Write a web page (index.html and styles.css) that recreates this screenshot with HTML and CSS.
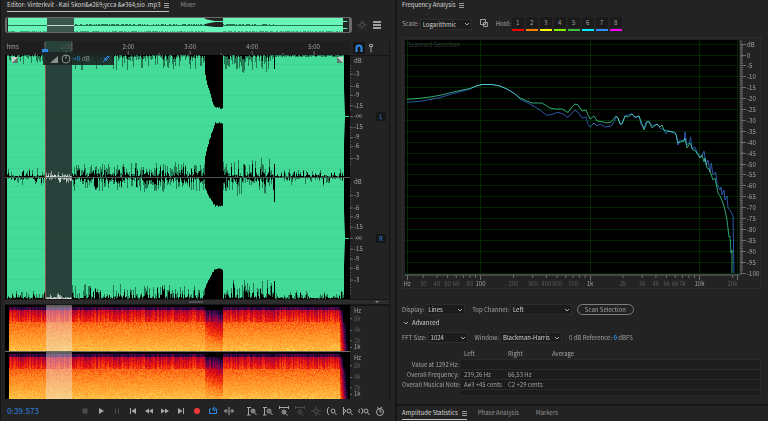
FILE: index.html
```html
<!DOCTYPE html>
<html lang="en">
<head>
  <meta charset="UTF-8">
  <meta name="viewport" content="width=device-width, initial-scale=1.0">
  <title>Audio Editor</title>
  <link rel="stylesheet" href="styles.css">
</head>
<body>
  <section class="panel editor">
    <nav class="tabs">
      <a class="tab active" href="#editor">Editor: Vinterkvit - Kali Skon&amp;#269;ycca &amp;#364;sio .mp3 <span class="menu"></span></a>
      <a class="tab" href="#mixer">Mixer</a>
    </nav>

    <div class="overview">
      <div class="overview-frame"><canvas id="overview"></canvas></div>
      <svg class="icon dim" viewBox="0 0 12 12"><circle cx="6" cy="6" r="2"/><path d="M1 6h3M8 6h3M6 1.500v2.500M6 8v2.500M3 9l1.500-1.500M9 3 7.500 4.500M9 9l1 1"/></svg>
      <svg class="icon list" viewBox="0 0 12 12"><path d="M2 3h8M2 6h8M2 9h8"/></svg>
    </div>

    <div class="tracks">
      <svg class="ruler" id="ruler"></svg>
      <div class="ruler-tools">
        <button class="snap" aria-label="Snapping"><svg class="icon" viewBox="0 0 12 12"><path d="M3.500 10V6a2.500 2.500 0 0 1 5 0v4"/></svg></button>
        <button aria-label="Marker"><svg class="icon" viewBox="0 0 12 12"><path d="M4.500 2.500h3v2h-3zM6 4v6.500"/></svg></button>
      </div>

      <canvas class="wave" id="wave"></canvas>
      <div class="gutter">
        <svg class="scale" id="db-scale"></svg>
        <div class="channels">
          <button class="channel">L</button>
          <button class="channel">R</button>
        </div>
      </div>

      <div class="scrollbar"><span class="thumb"></span><span class="arrow"></span></div>

      <canvas class="spectrum" id="spectrum"></canvas>
      <div class="gutter"><svg class="scale" id="hz-scale"></svg></div>

      <div class="hud">
        <svg viewBox="0 0 22 12"><path class="fill" d="M1 10h8V3z"/><circle cx="17" cy="6" r="4"/><path d="M17 6V2"/></svg>
        <span class="gain">+0</span><span>dB</span>
        <svg class="pin" viewBox="0 0 12 12"><path d="m3 9 2-2M4 5l3 3M5 6l3-3 1 1-3 3"/></svg>
      </div>
    </div>

    <div class="transport">
      <output class="time">0:39.573</output>
      <div class="buttons">
        <button class="dim" aria-label="Stop"><svg class="icon" viewBox="0 0 12 12"><path class="fill" d="M3.500 3.500h5v5h-5z"/></svg></button>
        <button aria-label="Play"><svg class="icon" viewBox="0 0 12 12"><path class="fill" d="M4 3l5 3-5 3z"/></svg></button>
        <button class="dim" aria-label="Pause"><svg class="icon" viewBox="0 0 12 12"><path d="M4.500 3.500v5M7.500 3.500v5"/></svg></button>
        <button aria-label="Previous"><svg class="icon" viewBox="0 0 12 12"><path class="fill" d="M9 3v6L4.500 6z"/><path d="M3.500 3v6"/></svg></button>
        <button aria-label="Rewind"><svg class="icon" viewBox="0 0 12 12"><path class="fill" d="M6 3.500v5L2 6zM10 3.500v5L6 6z"/></svg></button>
        <button aria-label="Fast forward"><svg class="icon" viewBox="0 0 12 12"><path class="fill" d="M2 3.500v5L6 6zM6 3.500v5L10 6z"/></svg></button>
        <button aria-label="Next"><svg class="icon" viewBox="0 0 12 12"><path class="fill" d="M3 3v6l4.500-3z"/><path d="M8.500 3v6"/></svg></button>
        <button class="record" aria-label="Record"><svg class="icon" viewBox="0 0 12 12"><circle class="fill" cx="6" cy="6" r="3"/></svg></button>
        <button class="loop" aria-label="Loop"><svg class="icon" viewBox="0 0 12 12"><path d="M4 4H2.500v4.500h7V4H6M8 2 5.500 4 8 6"/></svg></button>
        <button aria-label="Skip selection"><svg class="icon" viewBox="0 0 12 12"><path d="M6 2v8M1.500 6H5M7 6h3.500M3.500 4l-2 2 2 2M8.500 4l2 2-2 2"/></svg></button>
      </div>
      <div class="buttons">
        <button aria-label="Zoom in amplitude"><svg class="icon" viewBox="0 0 12 12"><circle cx="7" cy="6" r="2"/><path d="m8.500 7.500 2 2.500M1 2.500h4M2.500 3v7M1 10h3.500M6 6h2M7 5v2"/></svg></button>
        <button aria-label="Zoom out amplitude"><svg class="icon" viewBox="0 0 12 12"><circle cx="7" cy="6" r="2"/><path d="m8.500 7.500 2 2.500M1 2.500h4M2.500 3v7M1 10h3.500M6 6h2"/></svg></button>
        <button aria-label="Zoom in time"><svg class="icon" viewBox="0 0 12 12"><circle cx="6" cy="7" r="2"/><path d="m7.500 8.500 2 2M1.500 2.500h9M1.500 1v3M10.500 1v3M5 7h2M6 6v2"/></svg></button>
        <button class="dim" aria-label="Zoom out time"><svg class="icon" viewBox="0 0 12 12"><circle cx="6" cy="7" r="2"/><path d="m7.500 8.500 2 2M1.500 2.500h9M1.500 1v3M10.500 1v3M5 7h2"/></svg></button>
        <button class="dim" aria-label="Zoom out full"><svg class="icon" viewBox="0 0 12 12"><circle cx="6" cy="6" r="2"/><path d="m7.500 7.500 2 2.500M1 6h3M8 6h3M6 1v3M6 8v3"/></svg></button>
        <button aria-label="Zoom to in point"><svg class="icon" viewBox="0 0 12 12"><circle cx="7" cy="6" r="2"/><path d="m8.500 7.500 2 2.500M3 2 1.500 4v4L3 10"/></svg></button>
        <button aria-label="Zoom to out point"><svg class="icon" viewBox="0 0 12 12"><circle cx="7" cy="6" r="2"/><path d="m8.500 7.500 2 2.500M1.500 2v8M2 4l2 2-2 2"/></svg></button>
        <button aria-label="Zoom to selection"><svg class="icon" viewBox="0 0 12 12"><circle cx="8" cy="6" r="2"/><path d="m9.500 7.500 2 2.500M2 4 .5 6 2 8M3.500 3 5 6 3.500 9"/></svg></button>
        <button aria-label="Time zoom"><svg class="icon" viewBox="0 0 12 12"><circle cx="6" cy="7" r="3.500"/><path d="M6 7V3.500L8 2M3 2.500l2 1M6 7h2"/></svg></button>
      </div>
    </div>
  </section>

  <div class="side">
    <section class="panel analysis">
      <nav class="tabs">
        <a class="tab current" href="#frequency">Frequency Analysis <span class="menu"></span></a>
      </nav>

      <div class="row scale-row">
        <label for="scale">Scale:</label>
        <div class="select w-scale">
          <select id="scale"><option>Logarithmic</option><option>Linear</option></select>
          <svg class="chevron" viewBox="0 0 8 8"><path d="m2 3 2 2 2-2"/></svg>
        </div>
        <button class="copy" aria-label="Copy"><svg class="icon" viewBox="0 0 12 12"><path d="M1.500 1.500h5v5h-5zM4.500 4.500h4v4h-4z"/></svg></button>
        <span class="hold-label">Hold:</span>
        <div class="holds">
          <button class="hold red">1</button>
          <button class="hold orange">2</button>
          <button class="hold yellow">3</button>
          <button class="hold lime">4</button>
          <button class="hold green">5</button>
          <button class="hold cyan">6</button>
          <button class="hold blue">7</button>
          <button class="hold magenta">8</button>
        </div>
      </div>

      <!-- user units start at the frame's corner (402, 37) -->
      <svg class="graph" viewBox="402 37 359 252">
        <rect class="plot" x="405" y="40" width="334" height="234"/>
        <g id="grid"></g>
        <text class="note" x="408" y="47">Scanned Selection</text>
        <path class="curve left" d="M407 99.300 420 98.300 430 97 440 95.300 450 92.800 460 90.500 470 88.500 476 86 482 84.500H492L500 86 507 89 515 94 520 98 527 101 532 103H542L550 108 555 109H562L568 112.500 572 107 575 104 578 105 582 111 586 110 588 115 590 119 594 116 597 121 604 122 606 123 611 122 616 116 618 118 620 124 622 124 625 116 628 117 632 114 635 117 639 116 642 124 644 130 647 122 649 122 652 128 657 124 660 127 662 125 664 130 668 131 674 132 676 134 678 143 680 142 684 141 685 138 687 148 690 143 693 150 695 150 698 155 700 158 702 155 704 162 705 158 707 168 709 169 711 174 713 180 715 178 717 188 718 193 720 196 723 203 725 210 727 220 729 237 730 236 731 253 732 250 732 273"/>
        <path class="curve right" d="M407 102.300 420 101.300 430 99.500 440 97.500 450 94.500 460 91.800 470 89 476 86.200 482 84.500H492L500 86 507 89 515 94 520 99 530 104 540 110 547 115.500 553 114 558 112.300 563 114 568 117.500 572 113 575 110 578 112 582 118 586 117 588 124 590 127 594 123 597 126 600 124 605 127 611 126 614 122 616 117 618 118 620 124 622 124 625 116 628 115 632 113.500 635 118 639 116 641 124 644 128 646 122 649 121 652 126 657 124 660 128 664 130 666 134 668 131 674 133 676 134 678 145 680 140 684 141 685 132 687 145 689 143 690.700 137 692 149 695 147 697 152 700 157 702 156 704 151 706 165 708 160 710 172 711.300 163 713 175 715.700 172 717 184 720 190 721 187 722 195 724 190 725 200 727 196 728 208 730 210 733 216 734 273"/>
        <g id="graph-scale"></g>
      </svg>

      <div class="row display-row">
        <label for="display">Display:</label>
        <div class="select w-small">
          <select id="display"><option>Lines</option><option>Area</option></select>
          <svg class="chevron" viewBox="0 0 8 8"><path d="m2 3 2 2 2-2"/></svg>
        </div>
        <label class="second" for="channel">Top Channel:</label>
        <div class="select w-large">
          <select id="channel"><option>Left</option><option>Right</option></select>
          <svg class="chevron" viewBox="0 0 8 8"><path d="m2 3 2 2 2-2"/></svg>
        </div>
        <button class="scan">Scan Selection</button>
      </div>

      <details open>
        <summary><svg class="chevron" viewBox="0 0 8 8"><path d="m2 3 2 2 2-2"/></svg>Advanced</summary>
        <div class="row">
          <label for="fft">FFT Size:</label>
          <div class="select w-small">
            <select id="fft"><option>1024</option><option>2048</option></select>
            <svg class="chevron" viewBox="0 0 8 8"><path d="m2 3 2 2 2-2"/></svg>
          </div>
          <label class="second" for="window">Window:</label>
          <div class="select w-large">
            <select id="window"><option>Blackman-Harris</option><option>Hann</option></select>
            <svg class="chevron" viewBox="0 0 8 8"><path d="m2 3 2 2 2-2"/></svg>
          </div>
          <span class="reference">0 dB Reference: <b>0</b> dBFS</span>
        </div>
        <table>
          <thead>
            <tr><td></td><th>Left</th><th>Right</th><th>Average</th><th class="rest"></th></tr>
          </thead>
          <tbody>
            <tr><th>Value at 1292 Hz:</th><td></td><td></td><td></td><td></td></tr>
            <tr><th>Overall Frequency:</th><td>239,26 Hz</td><td>66,53 Hz</td><td></td><td></td></tr>
            <tr><th>Overall Musical Note:</th><td>A#3 +45 cents</td><td>C2 +29 cents</td><td></td><td></td></tr>
            <tr class="last"><th></th><td></td><td></td><td></td><td></td></tr>
          </tbody>
        </table>
      </details>
    </section>

    <section class="panel stats">
      <nav class="tabs">
        <a class="tab active" href="#amplitude">Amplitude Statistics <span class="menu"></span></a>
        <a class="tab" href="#phase">Phase Analysis</a>
        <a class="tab markers" href="#markers">Markers</a>
      </nav>
    </section>
  </div>

  <script src="script.js"></script>
</body>
</html>
```
FILE: styles.css
```css
* {
  box-sizing: border-box;
}
body {
  margin: 0;
  height: 100vh;
  display: grid;
  grid-template-columns: 395fr 371fr;
  grid-template-rows: minmax(0, 1fr);
  gap: 2px;
  background: #151515;
  color: #a2a2a2;
  font-family: "Noto Sans CJK SC", "Open Sans", sans-serif;
  font-size: 6px;
  line-height: 10px;
  overflow: hidden;
}
button, select {
  font: inherit;
  color: inherit;
  background: none;
  border: none;
  padding: 0;
  margin: 0;
}
svg {
  display: block;
  fill: none;
  stroke: currentColor;
}
svg text {
  fill: currentColor;
  stroke: none;
}
.fill {
  fill: currentColor;
  stroke: none;
}
canvas {
  display: block;
  width: 100%;
  height: 100%;
}
.icon {
  width: 12px;
  height: 12px;
}
.panel {
  background: #232323;
  min-width: 0;
}

/* tabs */
.tabs {
  display: flex;
  gap: 11px;
}
.tab {
  display: flex;
  gap: 4px;
  height: 12px;
  color: #929292;
  text-decoration: none;
  white-space: nowrap;
}
.tab.active, .tab.current {
  color: #d8d8d8;
}
.tab.active {
  border-bottom: 1px solid #c4c4c4;
}
.menu {
  width: 5px;
  height: 5px;
  margin-top: 3px;
  background: repeating-linear-gradient(#9a9a9a 0 1px, transparent 1px 2px);
}

/* editor */
.editor {
  display: flex;
  flex-direction: column;
  padding-left: 4px;
  border-left: 1px solid #151515;
}
.editor .tabs {
  padding-left: 2px;
}
.overview {
  display: flex;
  align-items: center;
  gap: 3px;
  margin: 5px 0 8px;
  padding-right: 12px;
}
.overview-frame {
  flex: 1;
  min-width: 0;
  height: 16px;
  margin-right: 1px;
  border: 1px solid #6a6a6a;
  border-left-width: 2px;
  border-right-width: 3px;
  border-radius: 3px;
  overflow: hidden;
}
.dim {
  color: #4c4c4c;
}
.list {
  color: #a0a0a0;
  stroke-width: 2;
}
.tracks {
  position: relative;
  flex: 1;
  min-height: 0;
  display: grid;
  grid-template-columns: minmax(0, 1fr) 39px;
  grid-template-rows: 14px minmax(0, 244fr) 6px minmax(0, 95fr);
  margin-right: 5px;
  border-right: 1px solid #151515;
}
.ruler {
  width: 100%;
  height: 14px;
  background: #1e1e1e;
}
.ruler-tools {
  display: flex;
  align-items: center;
  padding-left: 3px;
}
.snap {
  background: #161616;
  color: #2d8ceb;
  stroke-width: 2;
}
.gutter {
  display: flex;
  min-height: 0;
  border-top: 1px solid #151515;
  overflow: hidden;
}
.scale {
  width: 26px;
  height: 100%;
}
.channels {
  flex: 1;
  display: flex;
  flex-direction: column;
  justify-content: space-around;
}
.channel {
  width: 10px;
  height: 9px;
  line-height: 9px;
  background: #161616;
  color: #2d8ceb;
}
.scrollbar {
  grid-column: 1 / 3;
  display: flex;
  align-items: center;
  background: #2c2c2c;
  border-top: 1px solid #181818;
  border-bottom: 1px solid #181818;
}
.thumb {
  width: 14px;
  height: 2px;
  margin-left: 48%;
  background: #505050;
}
.arrow {
  margin: 0 10px 0 auto;
  border: 2px solid transparent;
  border-top-color: #8a8a8a;
  border-bottom: none;
}
.hud {
  position: absolute;
  left: 10%;
  top: 11px;
  display: flex;
  align-items: center;
  gap: 2px;
  height: 13px;
  padding: 0 2px 0 6px;
  background: rgba(28, 36, 35, 0.9);
  color: #8a9290;
}
.hud svg {
  width: 22px;
  height: 12px;
}
.hud .pin {
  width: 12px;
  margin-left: 8px;
  color: #2d8ceb;
}
.gain {
  color: #2d8ceb;
}
.transport {
  display: flex;
  align-items: center;
  height: 21px;
}
.time {
  width: 73px;
  padding-left: 2px;
  color: #2d72c4;
  font-size: 8px;
  font-weight: 500;
}
.buttons {
  display: flex;
  margin-right: 7px;
  color: #a8a8a8;
}
.buttons button {
  width: 16px;
  padding: 0 2px;
}
.buttons .dim {
  color: #4c4c4c;
}
.buttons .record {
  color: #f03a3a;
}
.buttons .loop {
  color: #2d8ceb;
}

/* frequency analysis */
.side {
  display: flex;
  flex-direction: column;
  gap: 2px;
  min-width: 0;
}
.analysis {
  flex: 1;
  padding: 0 7px 0 5px;
}
.row {
  display: flex;
  align-items: center;
  gap: 1px;
  white-space: nowrap;
}
.scale-row {
  margin: 5px 0 6px;
}
.select {
  display: grid;
  align-items: center;
  background: #1c1c1c;
  border: 1px solid #2c2c2c;
}
.select select {
  grid-area: 1 / 1;
  width: 100%;
  height: 9px;
  padding-left: 2px;
  line-height: 9px;
  color: #d0d0d0;
  appearance: none;
}
.select .chevron {
  grid-area: 1 / 1;
  justify-self: end;
  pointer-events: none;
}
.chevron {
  width: 8px;
  height: 8px;
  color: #a8a8a8;
}
.w-scale {
  width: 52px;
}
.w-small {
  width: 40px;
}
.w-large {
  width: 62px;
}
.copy {
  margin-left: 6px;
}
.hold-label {
  margin-left: 4px;
}
.holds {
  display: flex;
  gap: 2px;
}
.hold {
  width: 12px;
  height: 14px;
  line-height: 10px;
  background: linear-gradient(#1b1b1b 0 11px, #232323 11px);
  border-bottom: 2px solid;
}
.red { border-color: #f00000; }
.orange { border-color: #ff8000; }
.yellow { border-color: #ffff00; }
.lime { border-color: #80f000; }
.green { border-color: #40c040; }
.cyan { border-color: #00f0ff; }
.blue { border-color: #3090ff; }
.magenta { border-color: #ff00ff; }
.graph {
  width: 100%;
  outline: 1px solid #2d2d2d;
  outline-offset: -1px;
}
.plot {
  fill: #000;
  stroke: none;
}
.grid-line {
  stroke: #002800;
}
.graph .note {
  fill: #3c3c3c;
}
.curve {
  stroke-width: 1;
  mix-blend-mode: screen;
}
.curve.left {
  stroke: #2fa573;
}
.curve.right {
  stroke: #2c55a8;
}
.axis {
  stroke: #6a6a6a;
}
.minor {
  color: #5a5a5a;
}
.major {
  color: #a0a0a0;
}
.display-row {
  margin-top: 15px;
}
.second {
  margin-left: 6px;
}
.scan {
  width: 57px;
  height: 11px;
  margin-left: 4px;
  line-height: 9px;
  border: 1px solid #7c7c7c;
  border-radius: 6px;
}
summary {
  display: flex;
  align-items: center;
  gap: 2px;
  margin: 3px 0 4px;
  color: #d0d0d0;
  list-style: none;
}
.reference {
  margin-left: 6px;
}
.reference b {
  color: #2d8ceb;
}
table {
  width: 100%;
  margin-top: 6px;
  border-collapse: collapse;
  table-layout: fixed;
}
th, td {
  width: 44px;
  height: 10px;
  padding: 0 0 0 3px;
  line-height: 9px;
  font-weight: 400;
  text-align: left;
  white-space: nowrap;
}
tr > :first-child {
  width: 59px;
  padding: 0 2px 0 0;
  text-align: right;
}
thead .rest {
  width: auto;
}
tbody td {
  background: #1c1c1c;
  border-top: 1px solid #2a2a2a;
  border-bottom: 1px solid #2a2a2a;
}
tbody td:last-child {
  border-right: 1px solid #2a2a2a;
}
.last > * {
  height: 6px;
  line-height: 5px;
}

/* statistics */
.stats {
  height: 15px;
  padding: 2px 5px 0;
}
.markers {
  margin-left: 6px;
}
```
FILE: script.js
```js
const GREEN = '#44db98';

// audio position as a fraction of the visible width
const START = 0.006, SEL_START = 0.116, SEL_END = 0.194, DIP = 0.578, DIP_END = 0.63, LOUD_END = 0.778, END = 0.98;

let seed = 7;
function rand() {
  seed = (seed * 1664525 + 1013904223) >>> 0;
  return seed / 4294967296;
}

function setup(id) {
  const canvas = document.getElementById(id);
  canvas.width = canvas.clientWidth;
  canvas.height = canvas.clientHeight;
  return { c: canvas.getContext('2d'), w: canvas.width, h: canvas.height };
}

function noise(f, outer) {
  if (f < SEL_START) return 1 + 8 * Math.pow(rand(), 3);
  if (f < SEL_END) return 1 + 6 * rand() * rand();
  if (f < DIP) return 1 + 14 * Math.pow(rand(), outer ? 2 : 1.3);
  if (f < LOUD_END) return 1 + 18 * Math.pow(rand(), 2);
  return 1 + 8 * Math.pow(rand(), outer ? 3 : 4);
}

// height of the hole above (or under) the signal in the quiet bar, 0 to 1
function dip(f) {
  const t = (f - DIP) / (DIP_END - DIP);
  if (t < 0 || t > 1) return 0;
  return Math.min(1, 0.28 + 1.1 * Math.pow(t, 0.75));
}

function drawWave() {
  const { c, w, h } = setup('wave');
  const half = h / 2;
  c.fillStyle = '#000';
  c.fillRect(0, 0, w, h);
  for (let x = Math.round(START * w); x < END * w; x++) {
    const f = x / w;
    const selected = f >= SEL_START && f < SEL_END;
    c.fillStyle = selected ? '#28413a' : GREEN;
    c.fillRect(x, 0, 1, h);
    const edges = [
      [0, 1, 52], [half, -1, 53], [half, 1, 28], [h, -1, 29]
    ];
    edges.forEach(([y, dir, hole], i) => {
      let d = noise(f, i === 0 || i === 3);
      if (i === 0 && f > LOUD_END) d = 1 + rand();
      const drop = dip(f);
      if (drop > 0) {
        c.fillStyle = '#000';
        d = hole * drop + 2 * rand();
        c.fillRect(x, dir > 0 ? y : y - d, 1, d);
        return;
      }
      if (selected && i === 0) return;
      c.fillStyle = selected ? '#8a9a94' : '#237a55';
      c.fillRect(x, Math.round(dir > 0 ? y : y - d), 1, Math.round(d));
      const k = d * rand() * (i === 0 ? 0.4 : 0.95);
      c.fillStyle = selected ? '#d0d8d4' : '#000';
      c.fillRect(x, Math.round(dir > 0 ? y : y - k), 1, Math.round(k));
    });
  }
  // last beat before the outro
  c.fillStyle = '#000';
  c.fillRect(Math.round(LOUD_END * w) + 1, 0, 1, 14);
  c.fillRect(Math.round(LOUD_END * w) + 1, half - 13, 1, 38);
  c.fillRect(Math.round(LOUD_END * w) + 1, h - 18, 1, 18);
  // tail
  c.fillStyle = GREEN;
  [h / 4, h * 3 / 4].forEach(y => {
    c.beginPath();
    c.moveTo(END * w, y - 50);
    c.lineTo(END * w + 2, y);
    c.lineTo(END * w, y + 50);
    c.fill();
    c.fillRect(END * w, Math.round(y), 6, 1);
  });
  c.fillStyle = 'rgba(0, 70, 30, 0.05)';
  [0.07, 0.16, 0.33, 0.42].forEach(p => [0, half].forEach(y => {
    c.fillRect(0, Math.round(y + p * half), w, 1);
    c.fillRect(0, Math.round(y + half - p * half), w, 1);
  }));
  c.fillStyle = 'rgba(0, 60, 30, 0.06)';
  c.fillRect(0, Math.round(h / 4), w, 1);
  c.fillRect(0, Math.round(h * 3 / 4), w, 1);
  c.fillStyle = 'rgba(80, 95, 88, 0.9)';
  c.fillRect(0, Math.round(half), w, 1);
  c.fillStyle = '#8a5a4a';
  c.fillRect(Math.round(SEL_START * w), 0, 1, h);
  // fade handles
  [[7, 1], [w - 13, 0]].forEach(([x, left]) => {
    c.fillStyle = '#5a7a6c';
    c.fillRect(x, 2, 6, 6);
    c.fillStyle = '#d0d0d0';
    c.beginPath();
    c.moveTo(x, 2);
    c.lineTo(x + 6, 2);
    c.lineTo(left ? x : x + 6, 8);
    c.fill();
  });
}

function drawOverview() {
  const { c, w, h } = setup('overview');
  c.fillStyle = '#232323';
  c.fillRect(0, 0, w, h);
  for (let x = 1; x < END * w; x++) {
    const f = x / w;
    const selected = f >= SEL_START && f < SEL_END;
    c.fillStyle = selected ? '#3c564d' : '#67f6b7';
    c.fillRect(x, 0, 1, h);
    c.fillStyle = selected ? '#c8d4ce' : '#267452';
    c.fillRect(x, h / 2, 1, 1);
    if (f > SEL_END && f < LOUD_END && rand() > 0.5) c.fillRect(x, h / 2 - 1, 1, 2);
    const drop = dip(f);
    if (drop > 0) {
      c.fillStyle = '#232323';
      c.fillRect(x, 0, 1, 3 * drop);
      c.fillRect(x, h / 2 - 3 * drop, 1, 5 * drop);
    } else if (!selected) {
      c.fillStyle = '#39a878';
      c.fillRect(x, h - 1, 1, rand() > 0.4 ? 1 : 0);
    }
  }
  c.fillStyle = '#67f6b7';
  c.fillRect(END * w, 3, 5, 1);
  c.fillRect(END * w, 10, 5, 1);
}

const STOPS = [
  [0, 0, 0, 0], [0.18, 45, 8, 75], [0.34, 140, 5, 70], [0.48, 215, 8, 25],
  [0.6, 245, 50, 10], [0.74, 255, 130, 30], [0.9, 255, 180, 60], [1, 255, 222, 95]
];
function heat(v) {
  v = Math.max(0, Math.min(1, v));
  let i = 1;
  while (v > STOPS[i][0]) i++;
  const a = STOPS[i - 1], b = STOPS[i];
  const t = (v - a[0]) / (b[0] - a[0]);
  return [1, 2, 3].map(k => a[k] + (b[k] - a[k]) * t);
}

function drawSpectrum() {
  const { c, w, h } = setup('spectrum');
  const img = c.createImageData(w, h);
  const half = Math.floor(h / 2);
  for (let x = 0; x < w; x++) {
    const f = x / w;
    const streak = rand();
    for (let y = 0; y < h; y++) {
      const t = (y % half) / half;
      let v;
      if (t < 0.04) v = 0;
      else if (t < 0.1) v = 0.1 + 0.18 * streak;
      else if (t < 0.36) v = 0.34 + (t - 0.1) * 0.75 + 0.16 * streak;
      else v = 0.68 + (t - 0.36) * 0.4;
      if (t >= 0.1) v += (rand() - 0.5) * 0.12;
      if (f > DIP && f < DIP_END) {
        const k = (f - DIP) / (DIP_END - DIP);
        v -= Math.max(0, 0.45 - t * 0.4) * (0.5 + k * 0.5);
      }
      if (f < START * 1.5) v = 0;
      if (f > 0.97) v -= (f - 0.965) * 32;
      let rgb = heat(v);
      if (f >= SEL_START && f < SEL_END) rgb = rgb.map(n => n * 0.6 + 95);
      const o = (y * w + x) * 4;
      img.data.set([rgb[0], rgb[1], rgb[2], 255], o);
    }
  }
  c.putImageData(img, 0, 0);
  c.fillStyle = '#6e6e62';
  c.fillRect(0, half - 1, w, 1);
  // the odd row at the bottom is left blank
  c.fillStyle = '#232323';
  c.fillRect(0, half * 2, w, h - half * 2);
}

const tick = (x1, y1, x2, y2, cls) => `<line class="${cls || 'axis'}" x1="${x1}" y1="${y1}" x2="${x2}" y2="${y2}"/>`;
const label = (x, y, s, cls, anchor) => `<text class="${cls || ''}" x="${x}" y="${y}" text-anchor="${anchor || 'start'}">${s}</text>`;

function drawRuler() {
  let out = `<rect x="11.600%" y="0" width="7.800%" height="14" fill="#27423a" stroke="none"/>`;
  out += label('0.500%', 8, 'hms');
  for (let i = 0; i < 11; i++) {
    const x = (i * 8.98 - 0.2) + '%';
    out += tick(x, i % 2 ? 12 : 10, x, 14);
    if (i && i % 2 === 0) out += label(x, 8, i / 2 + ':00', i === 2 ? 'minor' : '', 'middle');
  }
  out += tick('11.600%', 1, '11.600%', 10) + tick('19.400%', 1, '19.400%', 10);
  out += `<svg x="11.600%" overflow="visible"><path d="M-3 8h6v3l-3 3-3-3z" fill="#2d8ceb" stroke="none"/></svg>`;
  document.getElementById('ruler').innerHTML = out;
}

function drawScales() {
  const marks = [['dB', 2], ['-3', 7.5], ['-6', 12.5], ['-9', 16.2], ['-15', 20.5], ['-∞', 25], ['-15', 29.5], ['-9', 33.6], ['-6', 37.3], ['-3', 42.2]];
  let out = '';
  [0, 50].forEach(base => marks.forEach(([s, p]) => {
    const y = base + p;
    if (s !== 'dB') out += tick(0, y + '%', 3, y + '%');
    out += label(4, (y + 0.7) + '%', s);
  }));
  for (let p = 4; p < 98; p += 1.2) if (Math.abs(p - 50) > 4 && Math.abs(p % 50 - 25) > 3) out += tick(0, p + '%', 1, p + '%');
  document.getElementById('db-scale').innerHTML = out;

  out = '';
  [0, 50].forEach(base => [['Hz', 5], ['8k', 13.5], ['4k', 26], ['2k', 37], ['1k', 44]].forEach(([s, p]) => {
    if (s !== 'Hz') out += tick(0, (base + p) + '%', 2, (base + p) + '%');
    out += label(4, (base + p + 2) + '%', s, /[842]k/.test(s) ? 'minor' : 'major');
  }));
  document.getElementById('hz-scale').innerHTML = out;
}

function drawGraph() {
  const dbY = db => 54.5 - db * 2.18;
  const hzX = hz => 480.5 + (Math.log10(hz) - 2) * 109.5;
  let grid = '', scale = tick(405, 275, 740, 275) + tick(741, 40, 741, 275);
  for (let db = 5; db >= -100; db -= 5) {
    const y = Math.round(dbY(db)) + 0.5;
    grid += tick(405, y, 739, y, 'grid-line');
    scale += tick(741, y, 746, y);
    scale += label(747, y + 2, db === 5 ? 'dB' : db);
  }
  for (let db = 4; db > -100; db--) scale += tick(741, dbY(db), 743, dbY(db));
  [21.5, 100, 1000, 10000, 22050].forEach(hz => {
    const x = Math.floor(hzX(hz)) + 0.5;
    grid += tick(x, 40, x, 274, 'grid-line');
    scale += tick(x, 275, x, 280);
  });
  [30, 40, 50, 60, 70, 80, 90, 200, 300, 400, 500, 600, 700, 800, 900,
    2000, 3000, 4000, 5000, 6000, 7000, 8000, 9000, 20000].forEach(hz => {
    scale += tick(hzX(hz), 275, hzX(hz), 278);
  });
  const names = { 30: '30', 40: '40', 50: '50', 60: '60', 80: '80', 200: '200', 300: '300', 400: '400', 500: '500', 700: '700',
    2000: '2k', 3000: '3k', 4000: '4k', 5000: '5k', 6000: '6k', 7000: '7k', 20000: '20k' };
  for (const hz in names) scale += label(hzX(hz), 286, names[hz], 'minor', 'middle');
  scale += label(407, 286, 'Hz', 'major', 'middle') + label(480.5, 286, '100', 'major', 'middle');
  scale += label(590, 286, '1k', 'major', 'middle') + label(699.5, 286, '10k', 'major', 'middle');
  document.getElementById('grid').innerHTML = grid;
  document.getElementById('graph-scale').innerHTML = scale;
}

function draw() {
  seed = 7;
  drawWave();
  drawOverview();
  drawSpectrum();
}

drawRuler();
drawScales();
drawGraph();
draw();
window.addEventListener('resize', draw);
```
